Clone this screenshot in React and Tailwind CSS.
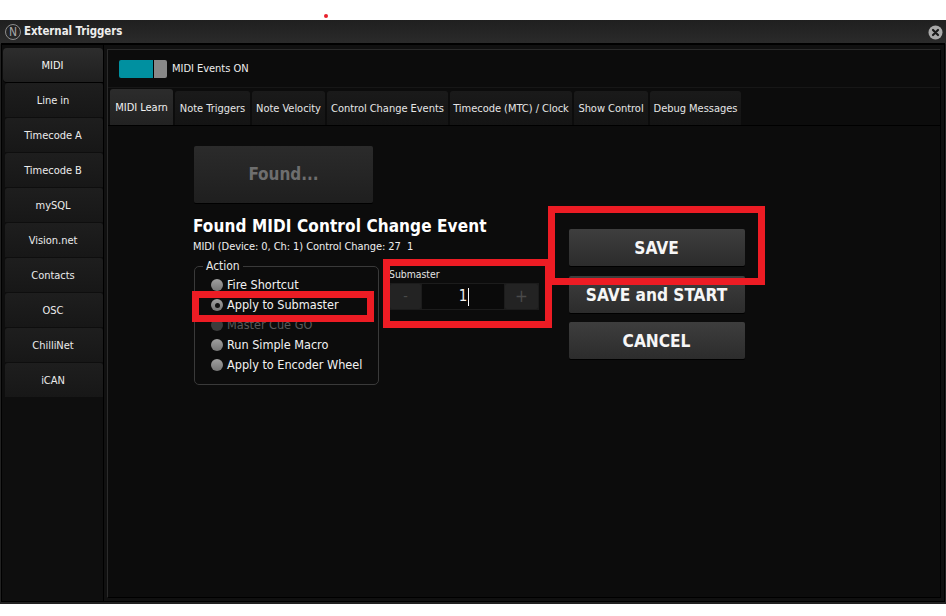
const sideItems = ["MIDI", "Line in", "Timecode A", "Timecode B", "mySQL", "Vision.net", "Contacts", "OSC", "ChilliNet", "iCAN"];

const tabs = [
  { label: "MIDI Learn", w: "w-[63px]" },
  { label: "Note Triggers", w: "w-[75px]" },
  { label: "Note Velocity", w: "w-[73px]" },
  { label: "Control Change Events", w: "w-[121px]" },
  { label: "Timecode (MTC) / Clock", w: "w-[122px]" },
  { label: "Show Control", w: "w-[74px]" },
  { label: "Debug Messages", w: "w-[91px]" },
];

const actions = [
  { label: "Fire Shortcut" },
  { label: "Apply to Submaster", checked: true },
  { label: "Master Cue GO", disabled: true },
  { label: "Run Simple Macro" },
  { label: "Apply to Encoder Wheel" },
];

function SideButton({ label, active }) {
  if (active) {
    return (
      <div className="h-[34px] w-[100px] flex items-center justify-center pr-[1px] pt-[2px] rounded-t-[4px] rounded-bl-[4px] bg-gradient-to-b from-[#2d2d2d] to-[#1f1f1f] text-[#f4f4f4] shadow-[0_1px_0_#000]">
        {label}
      </div>
    );
  }
  return (
    <div className="h-[34px] w-[98px] ml-[2px] flex items-center justify-center pr-[2px] pt-[2px] rounded-t-[3px] bg-gradient-to-b from-[#1e1e1e] to-[#171717] text-[#ececec]">
      {label}
    </div>
  );
}

function Radio({ label, checked, disabled }) {
  return (
    <div className="h-[20px] flex items-center pl-[16px]">
      <div
        className={
          "w-[12px] h-[12px] rounded-full flex items-center justify-center shrink-0 " +
          (disabled ? "bg-[#3c3c3c]" : "bg-gradient-to-b from-[#a0a0a0] to-[#767676]")
        }
      >
        {checked && <div className="w-[5px] h-[5px] rounded-full bg-[#111]" />}
      </div>
      <span className={"ml-[4px] text-[12.6px] " + (disabled ? "text-[#5a5a5a]" : "text-[#f2f2f2]")}>{label}</span>
    </div>
  );
}

function BigButton({ label, className }) {
  return (
    <div className={"w-[176px] h-[37px] pt-[2px] pr-[1px] rounded-[2px] bg-gradient-to-b from-[#3e3e3e] to-[#2c2c2c] shadow-[0_1px_0_#000] flex items-center justify-center text-[#f6f6f6] text-[17.2px] font-bold " + className}>
      {label}
    </div>
  );
}

export default function App() {
  return (
    <div className="relative w-[946px] h-[616px] bg-white overflow-hidden font-['DejaVu_Sans_Condensed','DejaVu_Sans',sans-serif] text-[11px] tracking-[-0.03px]">
      <div className="h-[20px]" />

      {/* window */}
      <div className="h-[584px] flex flex-col bg-[#222]">
        <div className="h-[24px] flex items-center pl-[5px] pr-[3px] bg-gradient-to-b from-[#1f1f1f] to-[#2b2b2b]">
          <div className="w-[16px] h-[16px] rounded-full border border-[#8c8c8c] flex items-center justify-center text-[12px] leading-none text-[#a8a8a8]">
            N
          </div>
          <span className="ml-[3px] text-[11.4px] font-bold text-[#ededed]">External Triggers</span>
          <svg className="ml-auto" width="15" height="15" viewBox="0 0 15 15">
            <circle cx="7.5" cy="7.5" r="7" fill="#a9a9a9" />
            <path d="M5 5 L10 10 M10 5 L5 10" stroke="#1a1a1a" strokeWidth="2.2" strokeLinecap="round" />
          </svg>
        </div>

        <div className="flex-1 flex mx-[2px] mb-[3px] bg-[#0e0e0e] border-t border-black min-h-0 shadow-[0_0_0_1px_#000]">
          {/* sidebar */}
          <div className="w-[101px] pt-[3px] pl-[1px] flex flex-col gap-[1px] shrink-0">
            {sideItems.map((item, i) => (
              <SideButton key={item} label={item} active={i === 0} />
            ))}
          </div>

          <div className="flex-1 flex flex-col border-l border-black pl-[3px] pr-[3px] pb-[3px] bg-[#101010]">
            <div className="flex-1 flex flex-col border border-black mt-[4px] border-t-[#2b2b2b] border-l-[#2b2b2b] bg-[#0c0c0c]">
              {/* events toggle */}
              <div className="h-[38px] flex items-center pl-[11px] border-b border-[#171717] bg-[#0c0c0c]">
                <div className="w-[48px] h-[18px] flex rounded-[2px] overflow-hidden">
                  <div className="w-[34px] bg-[#0090a0]" />
                  <div className="w-[1px] bg-black" />
                  <div className="flex-1 bg-[#888]" />
                </div>
                <span className="ml-[5px] pt-[1px] text-[#ececec]">MIDI Events ON</span>
              </div>

              {/* tabs */}
              <div className="h-[38px] flex items-end gap-[2px] pl-[2px] border-b border-black">
                {tabs.map((tab, i) => (
                  <div
                    key={tab.label}
                    className={
                      tab.w +
                      " flex items-center justify-center rounded-t-[3px] whitespace-nowrap pt-[2px] " +
                      (i === 0
                        ? "h-[36px] bg-gradient-to-b from-[#2c2c2c] to-[#222] text-[#f0f0f0]"
                        : "h-[34px] bg-gradient-to-b from-[#1a1a1a] to-[#141414] text-[#e6e6e6]")
                    }
                  >
                    {tab.label}
                  </div>
                ))}
              </div>

              {/* learn panel */}
              <div className="flex-1 flex pl-[85px] pt-[20px] bg-[#0c0c0c]">
                <div className="w-[376px] shrink-0">
                  <div className="ml-[1px] w-[179px] h-[57px] rounded-[2px] bg-gradient-to-b from-[#2b2b2b] to-[#1f1f1f] shadow-[0_1px_0_#000] flex items-center justify-center text-[17px] font-bold text-[#6e6e6e]">
                    Found...
                  </div>
                  <div className="mt-[12px] text-[17px] leading-[22px] font-bold text-white tracking-[0.1px]">
                    Found MIDI Control Change Event
                  </div>
                  <div className="mt-[3px] leading-[14px] text-[#efefef] tracking-[-0.07px]">
                    MIDI (Device: 0, Ch: 1) Control Change: 27&nbsp; 1
                  </div>
                  <div className="flex items-start">
                    <fieldset className="ml-[1px] mt-[5px] w-[185px] h-[126px] border border-[#3a3a3a] rounded-[5px]">
                      <legend className="ml-[8px] px-[3px] text-[12px] leading-[14px] text-[#e8e8e8]">Action</legend>
                      <div className="mt-[2px]">
                        {actions.map((a) => (
                          <Radio key={a.label} label={a.label} checked={a.checked} disabled={a.disabled} />
                        ))}
                      </div>
                    </fieldset>
                    <div className="ml-[10px] mt-[14px]">
                      <div className="text-[10.4px] leading-[13px] text-[#e4e4e4]">Submaster</div>
                      <div className="mt-[2px] w-[150px] h-[27px] flex items-stretch gap-[1px] bg-[#1c1c1c] p-[1px]">
                        <div className="w-[31px] rounded-[2px] bg-[#232323] flex items-center justify-center text-[14px] text-[#4a4a4a]">-</div>
                        <div className="flex-1 bg-[#0a0a0a] flex items-center justify-center pl-[2px] text-[15px] text-[#ededed]">
                          <span>1</span>
                          <span className="w-[1px] h-[18px] bg-white ml-[1px]" />
                        </div>
                        <div className="w-[33px] rounded-[2px] bg-[#232323] flex items-center justify-center text-[17px] text-[#4a4a4a]">+</div>
                      </div>
                    </div>
                  </div>
                </div>

                <div className="flex flex-col mt-[83px]">
                  <BigButton label="SAVE" />
                  <BigButton label="SAVE and START" className="mt-[10px]" />
                  <BigButton label="CANCEL" className="mt-[9px]" />
                </div>
              </div>
            </div>
          </div>
        </div>
      </div>

      {/* annotations drawn over the screenshot */}
      <div className="absolute left-[324px] top-[14px] w-[4px] h-[4px] rounded-full bg-[#e8202c]" />
      <div className="absolute left-[192px] top-[291px] w-[182px] h-[31px] border-[7px] border-[#ed1c24]" />
      <div className="absolute left-[383px] top-[259px] w-[169px] h-[69px] border-[7px] border-[#ed1c24]" />
      <div className="absolute left-[548px] top-[206px] w-[217px] h-[79px] border-[7px] border-[#ed1c24]" />
    </div>
  );
}
